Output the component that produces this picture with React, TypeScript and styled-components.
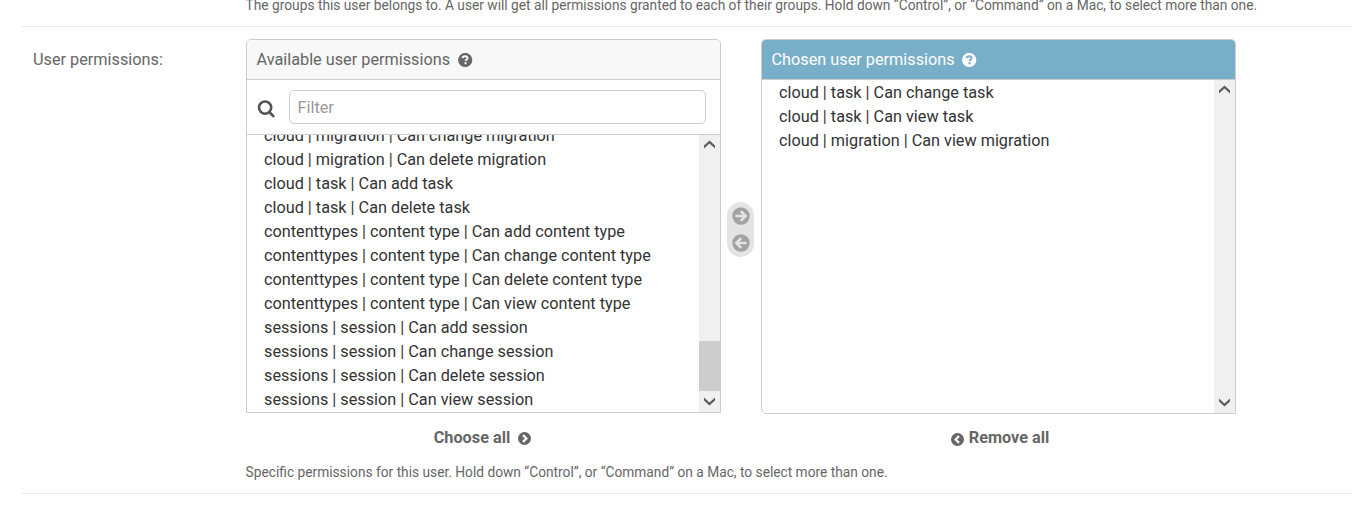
import React from 'react';
import styled, { createGlobalStyle, css } from 'styled-components';

const GlobalStyle = createGlobalStyle`
  *, *::before, *::after { box-sizing: border-box; }
  html, body { margin: 0; background: #fff; overflow: hidden; }
  body { font-family: Roboto, "Liberation Sans", Arial, sans-serif; font-size: 16px; color: #333; }
`;

const Form = styled.form`
  height: 516px;
  margin-left: 21px;
  overflow: hidden;
`;

const GroupsRow = styled.div`
  display: flex;
  align-items: flex-end;
  height: 27px;
  padding: 0 0 11px 225px;
  border-bottom: 1px solid #e8e8e8;
`;

const PermissionsRow = styled.div`
  display: flex;
  height: 467px;
  padding: 12px 0 0 12px;
  border-bottom: 1px solid #e8e8e8;
`;

const Label = styled.label`
  flex: none;
  width: 213px;
  line-height: 20px;
  padding-top: 11px;
  font-size: 16.25px;
  color: #666;
`;

const Help = styled.p`
  margin: 0 0 0 -0.4px;
  font-size: 13.74px;
  line-height: 20px;
  color: #666;
  white-space: nowrap;
`;

const Selector = styled.div`
  display: flex;
  align-items: flex-start;
  height: 423px;
`;

const Column = styled.div`
  width: 475px;
`;

const Panel = styled.section<{ $chosen?: boolean }>`
  display: flex;
  flex-direction: column;
  height: ${p => (p.$chosen ? 375 : 374)}px;
  border: 1px solid #ccc;
  border-radius: ${p => (p.$chosen ? '5px 5px 0 5px' : '5px 5px 0 0')};
  overflow: hidden;
`;

const PanelTitle = styled.h2<{ $chosen?: boolean }>`
  display: flex;
  align-items: center;
  flex: none;
  gap: 7.5px;
  height: 40px;
  margin: 0;
  padding: 0 9.5px;
  border-bottom: 1px solid #ccc;
  font-size: 16.25px;
  font-weight: 400;
  line-height: 20px;
  color: ${p => (p.$chosen ? '#fff' : '#666')};
  background: ${p => (p.$chosen ? '#79aec8' : '#f8f8f8')};
`;

const FilterBar = styled.div`
  display: flex;
  flex: none;
  gap: 13.5px;
  height: 55px;
  padding: 10px 14px 0 9.5px;
  border-bottom: 1px solid #ccc;
  svg { flex: none; margin-top: 9px; }
`;

const FilterInput = styled.input`
  flex: 1;
  min-width: 0;
  height: 34px;
  padding: 0 7.5px;
  border: 1px solid #ccc;
  border-radius: 5px;
  outline: 0;
  font: 16.25px Roboto, "Liberation Sans", sans-serif;
  &::placeholder { color: #999; opacity: 1; }
`;

const ListBox = styled.div`
  display: flex;
  flex: 1;
  min-height: 0;
`;

const Options = styled.ul<{ $scrolled?: boolean }>`
  flex: 1;
  display: flex;
  flex-direction: column;
  justify-content: ${p => (p.$scrolled ? 'flex-end' : 'flex-start')};
  margin: 0;
  padding: ${p => (p.$scrolled ? 0 : 1)}px 0 0 17px;
  overflow: hidden;
  list-style: none;
`;

const Option = styled.li`
  flex: none;
  height: 24px;
  font-size: 16.24px;
  line-height: 24px;
  white-space: nowrap;
`;

const ScrollTrack = styled.div`
  display: flex;
  flex-direction: column;
  align-items: center;
  justify-content: space-between;
  flex: none;
  width: 21px;
  background: #f0f0f0;
`;

const ScrollButton = styled.span<{ $tall?: boolean }>`
  display: flex;
  align-items: center;
  justify-content: center;
  width: 21px;
  height: ${p => (p.$tall ? 21 : 19)}px;
`;

const ScrollThumb = styled.span`
  width: 21px;
  height: 50px;
  margin-top: auto;
  background: #cdcdcd;
`;

const Chooser = styled.div`
  display: flex;
  flex-direction: column;
  align-items: center;
  gap: 9px;
  width: 27px;
  height: 55px;
  margin: 163px 7px 0 6px;
  padding-top: 5px;
  border-radius: 14px;
  background: #e4e4e4;
  svg { display: block; }
`;

const BulkAction = styled.a<{ $chosen?: boolean }>`
  display: flex;
  align-items: center;
  justify-content: center;
  gap: ${p => (p.$chosen ? 5 : 7.5)}px;
  padding-top: ${p => (p.$chosen ? 14 : 15)}px;
  font-size: 16.25px;
  font-weight: 700;
  line-height: 20px;
  color: #666;
  ${p => (p.$chosen ? css`padding-left: 3px;` : css`padding-right: 2.5px;`)}
  svg { margin-top: ${p => (p.$chosen ? 2 : 1)}px; }
`;

const HelpIcon = ({ mark }: { mark: string }) => (
  <svg width="15" height="14" viewBox="0 0 15 14" aria-hidden="true">
    <circle cx="7.2" cy="7" r="7.1" fill="currentColor" />
    <path d="M4.5 5.2C4.7 3.8 5.8 3.2 7.1 3.2c1.4 0 2.4.8 2.4 1.9 0 1.6-1.9 1.6-1.9 3" fill="none" stroke={mark} strokeWidth="2" />
    <rect x="6.5" y="9.1" width="2.1" height="2.1" fill={mark} />
  </svg>
);

const SearchIcon = () => (
  <svg width="19" height="19" viewBox="0 0 19 19" fill="none" stroke="#555" aria-hidden="true">
    <circle cx="8.1" cy="8.6" r="6.1" strokeWidth="2.6" />
    <path d="M12.3 13l4 4.1" strokeWidth="2.7" strokeLinecap="round" />
  </svg>
);

const ArrowIcon = ({ left }: { left?: boolean }) => (
  <svg width="18" height="18" viewBox="0 0 18 18" aria-hidden="true">
    <g transform={left ? 'rotate(180 9 9)' : undefined}>
      <circle cx="9" cy="9" r="8.7" fill="#a2a2a2" />
      <path d="M3.4 9h9.8M8.8 4.1L13.7 9l-4.9 4.9" fill="none" stroke="#e4e4e4" strokeWidth="2.5" />
    </g>
  </svg>
);

const ChevronBadge = ({ left }: { left?: boolean }) => (
  <svg width="13" height="13" viewBox="0 0 13 13" aria-hidden="true">
    <g transform={left ? 'rotate(180 6.5 6.5)' : undefined}>
      <circle cx="6.5" cy="6.5" r="6.5" fill="#666" />
      <path d="M5 3.1l3.4 3.4L5 9.9" fill="none" stroke="#fff" strokeWidth="2.2" />
    </g>
  </svg>
);

const ScrollArrow = ({ down }: { down?: boolean }) => (
  <svg width="11" height="9" viewBox="0 0 11 9" aria-hidden="true">
    <path d={down ? 'M0 .5l5.5 5 5.5-5v3l-5.5 5-5.5-5z' : 'M0 8.5l5.5-5 5.5 5v-3L5.5.5 0 5.5z'} fill="#5c5c5c" />
  </svg>
);

const ScrollBar = ({ thumb }: { thumb?: boolean }) => (
  <ScrollTrack>
    <ScrollButton><ScrollArrow /></ScrollButton>
    {thumb && <ScrollThumb />}
    <ScrollButton $tall><ScrollArrow down /></ScrollButton>
  </ScrollTrack>
);

const available = [
  'cloud | migration | Can change migration',
  'cloud | migration | Can delete migration',
  'cloud | task | Can add task',
  'cloud | task | Can delete task',
  'contenttypes | content type | Can add content type',
  'contenttypes | content type | Can change content type',
  'contenttypes | content type | Can delete content type',
  'contenttypes | content type | Can view content type',
  'sessions | session | Can add session',
  'sessions | session | Can change session',
  'sessions | session | Can delete session',
  'sessions | session | Can view session',
];

const chosen = [
  'cloud | task | Can change task',
  'cloud | task | Can view task',
  'cloud | migration | Can view migration',
];

export default function App() {
  return (
    <>
      <GlobalStyle />
      <Form>
        <GroupsRow>
          <Help>The groups this user belongs to. A user will get all permissions granted to each of their groups. Hold down “Control”, or “Command” on a Mac, to select more than one.</Help>
        </GroupsRow>
        <PermissionsRow>
          <Label>User permissions:</Label>
          <div>
            <Selector>
              <Column>
                <Panel>
                  <PanelTitle>Available user permissions <HelpIcon mark="#f8f8f8" /></PanelTitle>
                  <FilterBar>
                    <SearchIcon />
                    <FilterInput placeholder="Filter" />
                  </FilterBar>
                  <ListBox>
                    <Options $scrolled>{available.map(o => <Option key={o}>{o}</Option>)}</Options>
                    <ScrollBar thumb />
                  </ListBox>
                </Panel>
                <BulkAction>Choose all <ChevronBadge /></BulkAction>
              </Column>
              <Chooser>
                <ArrowIcon />
                <ArrowIcon left />
              </Chooser>
              <Column>
                <Panel $chosen>
                  <PanelTitle $chosen>Chosen user permissions <HelpIcon mark="#79aec8" /></PanelTitle>
                  <ListBox>
                    <Options>{chosen.map(o => <Option key={o}>{o}</Option>)}</Options>
                    <ScrollBar />
                  </ListBox>
                </Panel>
                <BulkAction $chosen><ChevronBadge left /> Remove all</BulkAction>
              </Column>
            </Selector>
            <Help>Specific permissions for this user. Hold down “Control”, or “Command” on a Mac, to select more than one.</Help>
          </div>
        </PermissionsRow>
      </Form>
    </>
  );
}
